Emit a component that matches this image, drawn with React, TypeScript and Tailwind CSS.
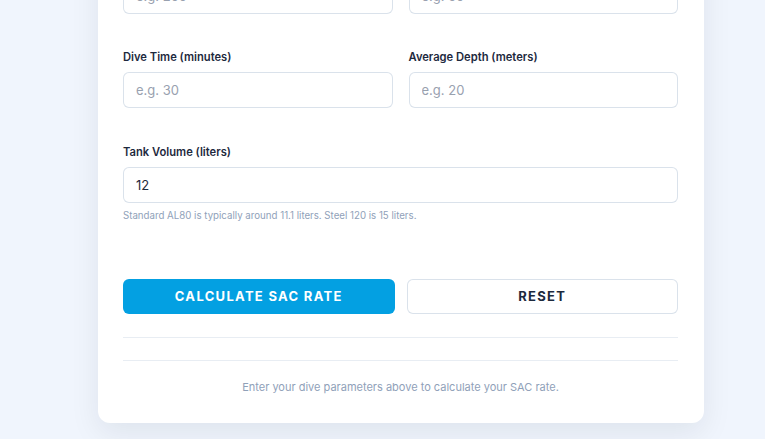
import React, { useState } from 'react';

type FieldProps = {
  label: string;
  placeholder: string;
  value?: string;
  onChange?: (v: string) => void;
};

function Field({ label, placeholder, value, onChange }: FieldProps) {
  return (
    <div className="flex flex-col">
      <label className="text-[11.2px] font-semibold text-slate-800 leading-4 mb-[7px]">{label}</label>
      <input
        type="number"
        placeholder={placeholder}
        value={value}
        onChange={(e) => onChange?.(e.target.value)}
        className="h-[36px] w-full rounded-md border border-slate-300/70 bg-white px-3 text-[13px] text-slate-800 placeholder:text-gray-400 outline-none focus:border-sky-500"
      />
    </div>
  );
}

function App() {
  const [start, setStart] = useState('');
  const [end, setEnd] = useState('');
  const [time, setTime] = useState('');
  const [depth, setDepth] = useState('');
  const [tank, setTank] = useState('12');

  const reset = () => {
    setStart('');
    setEnd('');
    setTime('');
    setDepth('');
    setTank('12');
  };

  return (
    <div className="min-h-screen w-full overflow-hidden bg-[#f0f5fd]" style={{ fontFamily: 'Inter, "Noto Sans", sans-serif' }}>
      <div className="ml-[98px] -mt-[70px] w-[606px] rounded-xl bg-white pl-[25px] pr-[26px] pt-[25px] pb-[28px] shadow-[0_10px_30px_rgba(15,23,42,0.08)]">
        <div className="flex flex-col">
          <div className="grid grid-cols-2 gap-4 mb-[35px]">
            <Field label="Start Pressure (bar)" placeholder="e.g. 200" value={start} onChange={setStart} />
            <Field label="End Pressure (bar)" placeholder="e.g. 50" value={end} onChange={setEnd} />
          </div>
          <div className="grid grid-cols-2 gap-4 mb-[36px]">
            <Field label="Dive Time (minutes)" placeholder="e.g. 30" value={time} onChange={setTime} />
            <Field label="Average Depth (meters)" placeholder="e.g. 20" value={depth} onChange={setDepth} />
          </div>
          <div className="flex flex-col">
            <Field label="Tank Volume (liters)" placeholder="e.g. 12" value={tank} onChange={setTank} />
            <p className="mt-[6px] text-[9.7px] leading-[14px] text-slate-400">
              Standard AL80 is typically around 11.1 liters. Steel 120 is 15 liters.
            </p>
          </div>
        </div>

        <div className="mt-[56px] grid grid-cols-2 gap-3">
          <button className="h-[35px] rounded-md bg-[#03a0e2] text-[13px] font-bold tracking-[0.1em] text-white">
            CALCULATE SAC RATE
          </button>
          <button
            onClick={reset}
            className="h-[35px] rounded-md border border-slate-300/70 bg-white text-[13px] font-bold tracking-[0.1em] text-slate-800"
          >
            RESET
          </button>
        </div>

        <div className="mt-[23px] border-t border-slate-200/80" />
        <div className="mt-[22px] border-t border-slate-200/80" />

        <p className="mt-[18px] text-center text-[11px] leading-4 text-slate-400">
          Enter your dive parameters above to calculate your SAC rate.
        </p>
      </div>
    </div>
  );
}

export default App;
